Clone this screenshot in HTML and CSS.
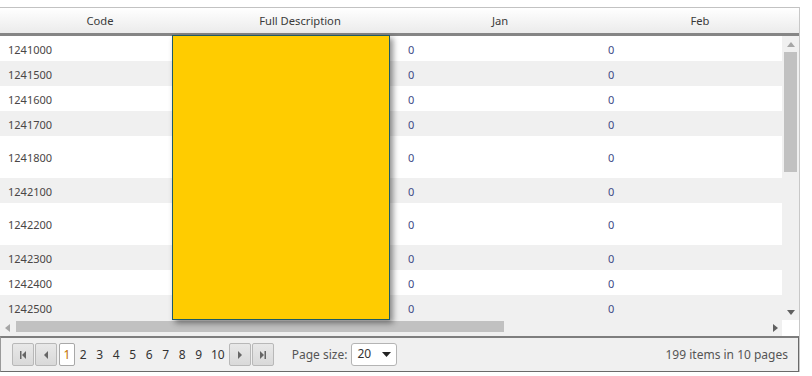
FILE: index.html
```html
<!DOCTYPE html>
<html>
<head>
<meta charset="utf-8">
<link rel="stylesheet" href="styles.css">
</head>
<body>
<div class="grid">
  <div class="header">
    <div class="th">Code</div>
    <div class="th">Full Description</div>
    <div class="th">Jan</div>
    <div class="th">Feb</div>
  </div>
  <div class="body">
    <div class="rows">
      <div class="row"><div class="td code">1241000</div><div class="td"></div><div class="td num">0</div><div class="td num">0</div></div>
      <div class="row alt"><div class="td code">1241500</div><div class="td"></div><div class="td num">0</div><div class="td num">0</div></div>
      <div class="row"><div class="td code">1241600</div><div class="td"></div><div class="td num">0</div><div class="td num">0</div></div>
      <div class="row alt"><div class="td code">1241700</div><div class="td"></div><div class="td num">0</div><div class="td num">0</div></div>
      <div class="row tall"><div class="td code">1241800</div><div class="td"></div><div class="td num">0</div><div class="td num">0</div></div>
      <div class="row alt"><div class="td code">1242100</div><div class="td"></div><div class="td num">0</div><div class="td num">0</div></div>
      <div class="row tall"><div class="td code">1242200</div><div class="td"></div><div class="td num">0</div><div class="td num">0</div></div>
      <div class="row alt"><div class="td code">1242300</div><div class="td"></div><div class="td num">0</div><div class="td num">0</div></div>
      <div class="row"><div class="td code">1242400</div><div class="td"></div><div class="td num">0</div><div class="td num">0</div></div>
      <div class="row alt"><div class="td code">1242500</div><div class="td"></div><div class="td num">0</div><div class="td num">0</div></div>
    </div>
    <div class="vscroll">
      <div class="varrow"><svg width="8" height="5" viewBox="0 0 8 5"><path d="M0 5 L4 0 L8 5 Z" fill="#a6a6a6"/></svg></div>
      <div class="vtrack"><div class="vthumb"></div></div>
      <div class="varrow"><svg width="8" height="5" viewBox="0 0 8 5"><path d="M0 0 L8 0 L4 5 Z" fill="#606060"/></svg></div>
    </div>
  </div>
  <div class="hscroll">
    <div class="harrow"><svg width="5" height="8" viewBox="0 0 5 8"><path d="M5 0 L5 8 L0 4 Z" fill="#a6a6a6"/></svg></div>
    <div class="htrack"><div class="hthumb"></div></div>
    <div class="harrow"><svg width="5" height="8" viewBox="0 0 5 8"><path d="M0 0 L5 4 L0 8 Z" fill="#606060"/></svg></div>
    <div class="corner"></div>
  </div>
  <div class="pager">
    <div class="btn"><svg width="10" height="10" viewBox="0 0 10 10"><rect x="2" y="1" width="1.5" height="8" fill="#666"/><path d="M8 1 L8 9 L4 5 Z" fill="#666"/></svg></div>
    <div class="btn"><svg width="10" height="10" viewBox="0 0 10 10"><path d="M7 1 L7 9 L3 5 Z" fill="#666"/></svg></div>
    <div class="pages">
      <span class="pg current">1</span>
      <span class="pg">2</span>
      <span class="pg">3</span>
      <span class="pg">4</span>
      <span class="pg">5</span>
      <span class="pg">6</span>
      <span class="pg">7</span>
      <span class="pg">8</span>
      <span class="pg">9</span>
      <span class="pg">10</span>
    </div>
    <div class="btn"><svg width="10" height="10" viewBox="0 0 10 10"><path d="M3 1 L7 5 L3 9 Z" fill="#666"/></svg></div>
    <div class="btn"><svg width="10" height="10" viewBox="0 0 10 10"><path d="M2 1 L6 5 L2 9 Z" fill="#666"/><rect x="6.5" y="1" width="1.5" height="8" fill="#666"/></svg></div>
    <span class="ps-label">Page size:</span>
    <div class="select"><span>20</span><svg width="9" height="5" viewBox="0 0 9 5"><path d="M0 0 L9 0 L4.5 5 Z" fill="#222"/></svg></div>
    <span class="info">199 items in 10 pages</span>
  </div>
  <div class="popup"></div>
</div>
</body>
</html>
```

FILE: styles.css
```css
html, body {
  margin: 0;
  padding: 0;
  background: #fff;
}
body {
  font-family: "Noto Sans", "Open Sans", sans-serif;
  font-size: 11px;
  color: #333;
}
.grid {
  position: relative;
  width: 800px;
  margin-top: 7px;
  box-sizing: border-box;
  border-top: 1px solid #c2c2c2;
  border-right: 1px solid #c8c8c8;
  overflow: hidden;
}
.header {
  display: flex;
  height: 25px;
  background: linear-gradient(#ffffff, #ebebeb);
  border-bottom: 3px solid #858585;
}
.th {
  flex: 0 0 200px;
  display: flex;
  align-items: center;
  justify-content: center;
  color: #3a3a3a;
  font-size: 11.2px;
}
.body {
  display: flex;
  height: 284px;
}
.rows {
  width: 782px;
  overflow: hidden;
}
.row {
  display: flex;
  height: 25px;
  background: #fff;
}
.row.alt { background: #f0f0f0; }
.row.tall { height: 42px; }
.td {
  flex: 0 0 200px;
  box-sizing: border-box;
  padding-left: 8px;
  padding-top: 1px;
  display: flex;
  align-items: center;
}
.code { color: #4a4646; }
.num { color: #3e4a86; }
.vscroll {
  width: 17px;
  background: #f0f0f0;
  display: flex;
  flex-direction: column;
}
.varrow {
  height: 16px;
  display: flex;
  align-items: center;
  justify-content: center;
}
.vtrack {
  flex: 1;
  padding: 0 2px;
}
.vthumb {
  height: 120px;
  background: #c1c1c1;
}
.hscroll {
  display: flex;
  height: 16px;
  background: #f0f0f0;
}
.harrow {
  width: 14px;
  display: flex;
  align-items: center;
  justify-content: center;
}
.htrack {
  flex: 1;
  padding: 1px 2px 4px 2px;
}
.hthumb {
  width: 488px;
  height: 11px;
  background: #c1c1c1;
}
.corner {
  width: 17px;
  background: #fff;
}
.pager {
  display: flex;
  align-items: center;
  height: 36px;
  box-sizing: border-box;
  border-top: 2px solid #7e7e7e;
  border-left: 1px solid #9a9a9a;
  border-right: 1px solid #6a6a6a;
  border-bottom: 1px solid #6a6a6a;
  background: #f0f0f0;
  padding-left: 11px;
  padding-right: 10px;
}
.btn {
  width: 22px;
  height: 23px;
  box-sizing: border-box;
  border: 1px solid #b8b8b8;
  border-radius: 2px;
  background: linear-gradient(#e8e8e8, #d9d9d9);
  display: flex;
  align-items: center;
  justify-content: center;
  margin-right: 1px;
}
.pages {
  display: flex;
  align-items: center;
  margin-left: 1px;
  margin-right: 1px;
}
.pg {
  min-width: 16.5px;
  height: 21px;
  box-sizing: border-box;
  padding: 0 4px;
  display: flex;
  align-items: center;
  justify-content: center;
  color: #333;
  font-size: 12px;
}
.pg:last-child { padding-right: 3px; }
.pg.current {
  background: #fff;
  border: 1px solid #a8a8a8;
  border-radius: 2px;
  height: 23px;
  width: 16px;
  min-width: 16px;
  padding: 0;
  color: #c07000;
}
.ps-label {
  margin-left: 17px;
  margin-right: 4px;
  color: #555;
  font-size: 12px;
}
.select {
  width: 46px;
  height: 23px;
  box-sizing: border-box;
  border: 1px solid #b4b4b4;
  border-radius: 3px;
  background: #fff;
  display: flex;
  align-items: center;
  justify-content: space-between;
  padding: 0 5px 0 5px;
  font-size: 12px;
  color: #333;
}
.select span { margin-top: -3px; }
.info {
  margin-left: auto;
  color: #555;
  font-size: 12px;
}
.popup {
  position: absolute;
  left: 172px;
  top: 27px;
  width: 218px;
  height: 285px;
  box-sizing: border-box;
  background: #ffcc00;
  border: 1px solid #1e5a66;
  box-shadow: 3px 3px 6px rgba(0, 0, 0, 0.45);
}
```
